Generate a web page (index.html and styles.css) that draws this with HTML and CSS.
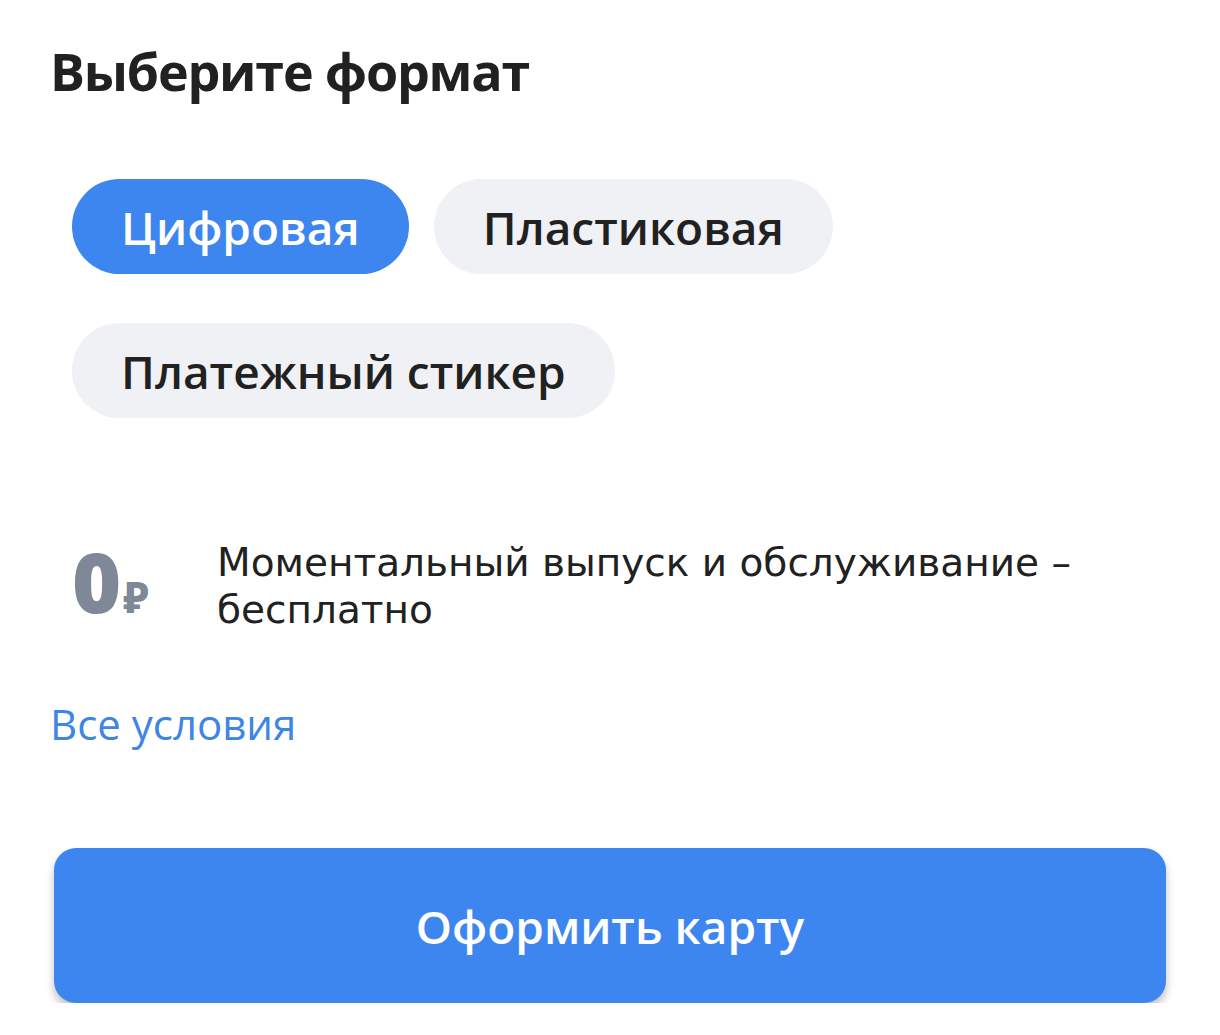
FILE: index.html
```html
<!DOCTYPE html>
<html lang="ru">
<head>
<meta charset="utf-8">
<link rel="stylesheet" href="styles.css">
</head>
<body>
<main class="page">
  <h1 class="title">Выберите формат</h1>
  <div class="chips">
    <button class="chip chip-active">Цифровая</button>
    <button class="chip">Пластиковая</button>
    <button class="chip">Платежный стикер</button>
  </div>
  <div class="price">
    <div class="price-value"><span class="zero">0</span><span class="rub">₽</span></div>
    <p class="price-text">Моментальный выпуск и обслуживание – бесплатно</p>
  </div>
  <a class="link" href="#">Все условия</a>
  <button class="submit">Оформить карту</button>
</main>
</body>
</html>
```
FILE: styles.css
```css
* { box-sizing: border-box; }
html, body { margin: 0; background: #fff; }
body { font-family: "Open Sans", "Noto Sans", sans-serif; color: #212121; }
.page { padding: 36px 54px 0 50px; display: flex; flex-direction: column; }
.title { margin: 0; font-size: 52px; font-weight: 700; line-height: 70px; letter-spacing: -1.2px; }
.chips { display: flex; flex-wrap: wrap; gap: 49px 25px; padding: 73px 0 0 22px; width: 820px; }
.chip { height: 95px; border: 0; border-radius: 48px; padding: 0 49px; background: #f0f1f5; color: #212121; font-family: inherit; font-size: 46px; font-weight: 600; }
.chip-active { background: #3d86f0; color: #fff; }
.price { display: flex; align-items: flex-start; padding: 121px 0 0 22px; }
.price-value { width: 145px; display: flex; align-items: baseline; color: #7f8896; font-weight: 800; }
.zero { font-size: 84px; line-height: 84px; }
.rub { font-size: 42px; margin-left: 2px; }
.price-text { margin: 0; font-family: "DejaVu Sans", sans-serif; font-size: 39px; line-height: 47px; width: 900px; }
.link { margin-top: 66px; font-size: 42px; color: #3d86e6; text-decoration: none; line-height: 50px; }
.submit { margin: 99px 0 0 4px; height: 155px; border: 0; border-radius: 22px; background: #3d86f0; color: #fff; font-family: inherit; font-size: 46px; font-weight: 600; box-shadow: 0 6px 8px rgba(0,0,0,0.25); }
```
